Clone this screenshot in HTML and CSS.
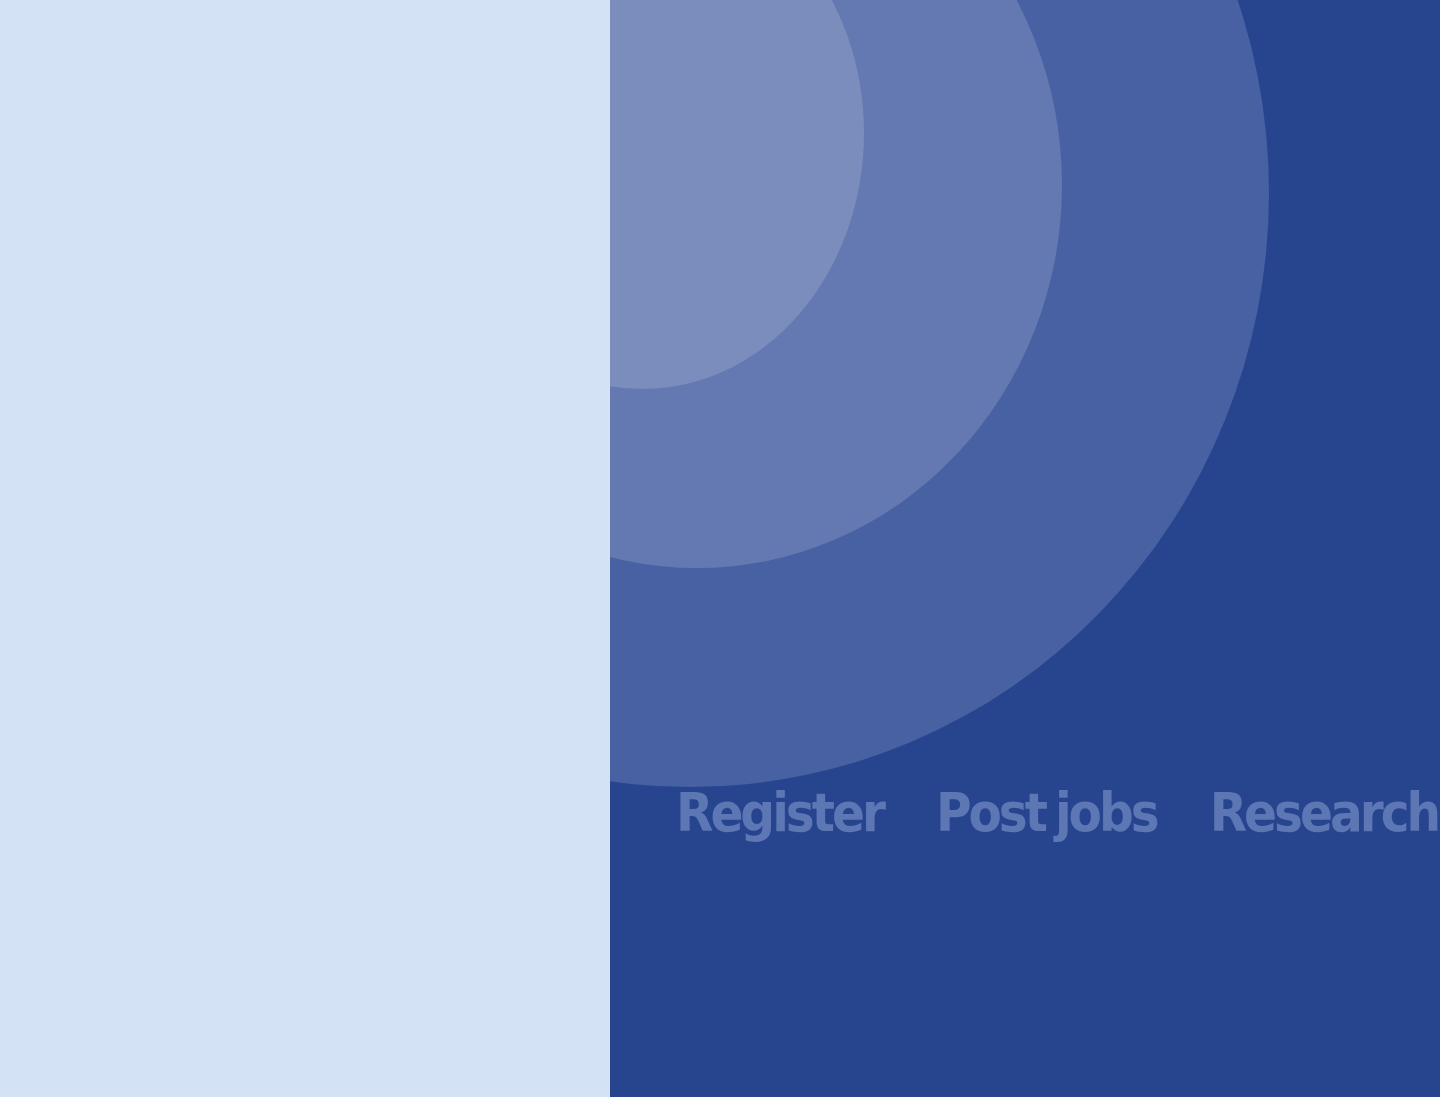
FILE: index.html
```html
<!DOCTYPE html>
<html lang="en">
<head>
<meta charset="utf-8">
<title>Jobs</title>
<link rel="stylesheet" href="styles.css">
</head>
<body>
<div class="page">
  <aside class="side"></aside>
  <main class="hero">
    <svg class="rings" viewBox="0 0 830 1097" preserveAspectRatio="none" aria-hidden="true">
      <ellipse cx="80" cy="193" rx="579" ry="594" fill="#4761A3"/>
      <ellipse cx="87" cy="185" rx="365" ry="383" fill="#6479B1"/>
      <ellipse cx="33" cy="133" rx="221" ry="256" fill="#7B8DBC"/>
    </svg>
    <nav class="nav">
      <a class="nav-link" href="#">Register</a>
      <a class="nav-link" href="#">Post jobs</a>
      <a class="nav-link" href="#">Research</a>
    </nav>
  </main>
</div>
</body>
</html>
```
FILE: styles.css
```css
html, body {
  margin: 0;
  padding: 0;
  height: 100%;
}
body {
  font-family: "DejaVu Sans Condensed", "DejaVu Sans", sans-serif;
  overflow: hidden;
}
.page {
  display: flex;
  height: 1097px;
}
.side {
  width: 610px;
  flex: 0 0 610px;
  background: #D3E2F5;
}
.hero {
  flex: 1;
  position: relative;
  overflow: hidden;
  background: #27448F;
}
.rings {
  position: absolute;
  left: 0;
  top: 0;
  width: 100%;
  height: 100%;
}
.nav {
  position: relative;
  display: flex;
  gap: 53px;
  padding: 781px 0 0 66px;
  white-space: nowrap;
}
.nav-link {
  color: #5D76B4;
  text-decoration: none;
  font-weight: bold;
  font-size: 54px;
  line-height: 64px;
  letter-spacing: -3px;
  word-spacing: -4px;
}
```
